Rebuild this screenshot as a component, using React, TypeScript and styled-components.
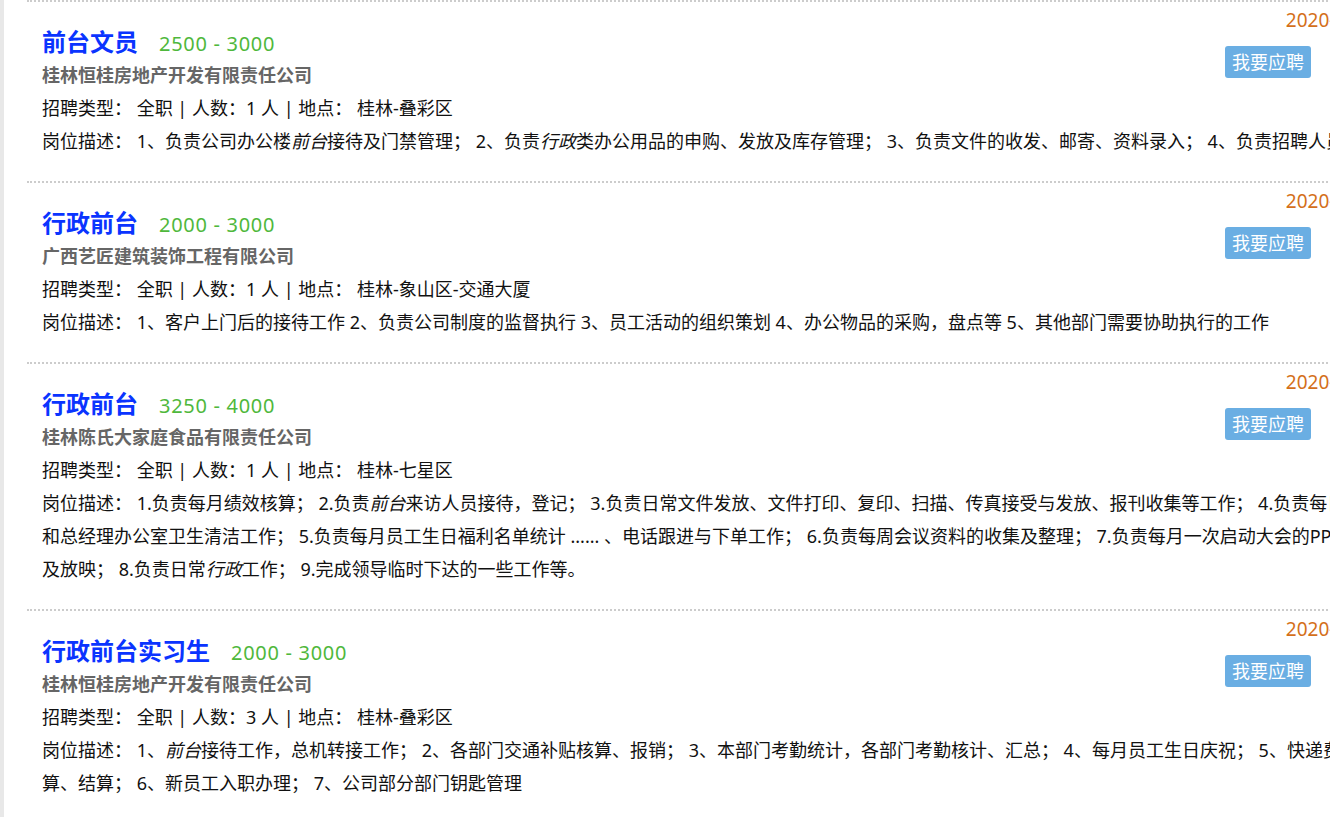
import React from 'react';
import styled, { createGlobalStyle } from 'styled-components';

const GlobalStyle = createGlobalStyle`
  html, body {
    margin: 0;
    padding: 0;
    overflow: hidden;
    background: #fff;
  }
  body {
    font-family: "Noto Sans", "Noto Sans CJK SC", sans-serif;
    color: #111;
  }
`;

const Page = styled.div`
  border-left: 4px solid #e8e8e8;
  padding-left: 23px;
  min-height: 100vh;
`;

const JobList = styled.ul`
  list-style: none;
  margin: 0;
  padding: 0;
  width: 1393px;
`;

const JobItem = styled.li`
  border-top: 2px dotted #ccc;
  padding: 6px 15px 23px;
`;

const Head = styled.div`
  display: grid;
  grid-template-columns: 1fr auto;
`;

const HeadMain = styled.div`
  padding-top: 17px;
`;

const TitleRow = styled.div`
  display: flex;
  align-items: baseline;
  height: 34px;
  line-height: 34px;
`;

const Title = styled.a`
  font-size: 24px;
  font-weight: bold;
  color: #0a34ff;
  text-decoration: none;
`;

const Salary = styled.span`
  margin-left: 21px;
  font-size: 20px;
  letter-spacing: 0.7px;
  color: #4fb83c;
`;

const Company = styled.div`
  font-size: 18px;
  line-height: 33px;
  font-weight: bold;
  color: #666;
`;

const Side = styled.div`
  display: flex;
  flex-direction: column;
  align-items: flex-end;
`;

const DateText = styled.span`
  font-size: 19px;
  line-height: 24px;
  color: #d4701a;
  margin-right: 20px;
`;

const ApplyButton = styled.button`
  margin-top: 14px;
  margin-right: 94px;
  height: 32px;
  padding: 0 7px;
  border: none;
  border-radius: 3px;
  background: #6aaee3;
  color: #fff;
  font-family: inherit;
  font-size: 18px;
  line-height: 32px;
  cursor: pointer;
`;

const Line = styled.p`
  margin: 0;
  font-size: 18px;
  line-height: 33px;
  color: #111;

  em {
    font-style: italic;
  }
`;

type Job = {
  title: string;
  salary: string;
  company: string;
  type: string;
  count: number;
  place: string;
  date: string;
  desc: string;
};

const jobs: Job[] = [
  {
    title: '前台文员',
    salary: '2500 - 3000',
    company: '桂林恒桂房地产开发有限责任公司',
    type: '全职',
    count: 1,
    place: '桂林-叠彩区',
    date: '2020-06-28',
    desc: '1、负责公司办公楼[前台]接待及门禁管理； 2、负责[行政]类办公用品的申购、发放及库存管理； 3、负责文件的收发、邮寄、资料录入； 4、负责招聘人员接待；',
  },
  {
    title: '行政前台',
    salary: '2000 - 3000',
    company: '广西艺匠建筑装饰工程有限公司',
    type: '全职',
    count: 1,
    place: '桂林-象山区-交通大厦',
    date: '2020-06-28',
    desc: '1、客户上门后的接待工作 2、负责公司制度的监督执行 3、员工活动的组织策划 4、办公物品的采购，盘点等 5、其他部门需要协助执行的工作',
  },
  {
    title: '行政前台',
    salary: '3250 - 4000',
    company: '桂林陈氏大家庭食品有限责任公司',
    type: '全职',
    count: 1,
    place: '桂林-七星区',
    date: '2020-06-27',
    desc: '1.负责每月绩效核算； 2.负责[前台]来访人员接待，登记； 3.负责日常文件发放、文件打印、复印、扫描、传真接受与发放、报刊收集等工作； 4.负责每日董事长和总经理办公室卫生清洁工作； 5.负责每月员工生日福利名单统计 ...... 、电话跟进与下单工作； 6.负责每周会议资料的收集及整理； 7.负责每月一次启动大会的PPT的制作及放映； 8.负责日常[行政]工作； 9.完成领导临时下达的一些工作等。',
  },
  {
    title: '行政前台实习生',
    salary: '2000 - 3000',
    company: '桂林恒桂房地产开发有限责任公司',
    type: '全职',
    count: 3,
    place: '桂林-叠彩区',
    date: '2020-06-27',
    desc: '1、[前台]接待工作，总机转接工作； 2、各部门交通补贴核算、报销； 3、本部门考勤统计，各部门考勤核计、汇总； 4、每月员工生日庆祝； 5、快递费用的核算、结算； 6、新员工入职办理； 7、公司部分部门钥匙管理',
  },
];

// keywords wrapped in [] are highlighted like the search hit
function renderDesc(text: string) {
  return text.split(/(\[[^\]]+\])/).map((part, i) =>
    part.startsWith('[') ? <em key={i}>{part.slice(1, -1)}</em> : <React.Fragment key={i}>{part}</React.Fragment>
  );
}

export default function App() {
  return (
    <>
      <GlobalStyle />
      <Page>
        <JobList>
          {jobs.map((job, idx) => (
            <JobItem key={idx}>
              <Head>
                <HeadMain>
                  <TitleRow>
                    <Title href="#">{job.title}</Title>
                    <Salary>{job.salary}</Salary>
                  </TitleRow>
                  <Company>{job.company}</Company>
                </HeadMain>
                <Side>
                  <DateText>{job.date}</DateText>
                  <ApplyButton>我要应聘</ApplyButton>
                </Side>
              </Head>
              <Line>
                招聘类型： 全职 | 人数：{job.count} 人 | 地点： {job.place}
              </Line>
              <Line>岗位描述： {renderDesc(job.desc)}</Line>
            </JobItem>
          ))}
        </JobList>
      </Page>
    </>
  );
}
